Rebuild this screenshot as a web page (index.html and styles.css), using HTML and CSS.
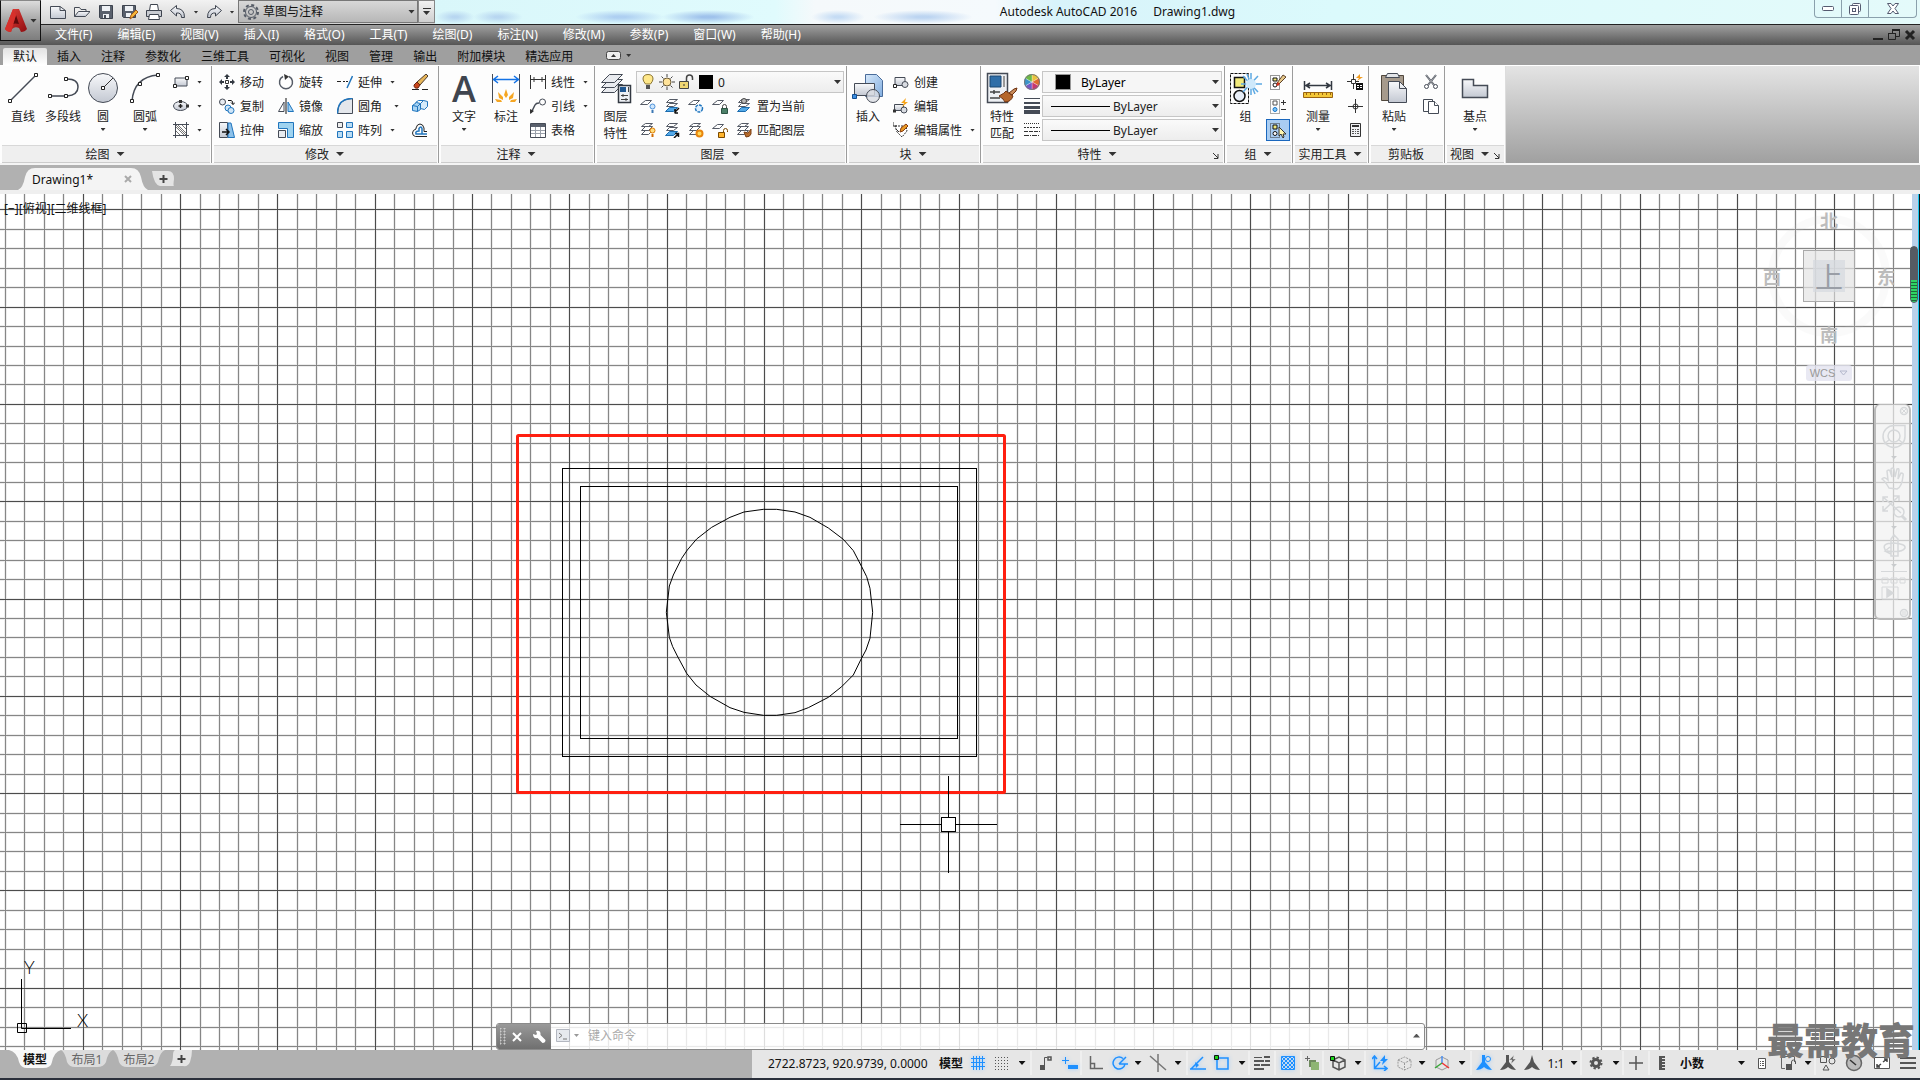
FILE: index.html
```html
<!DOCTYPE html>
<html lang="zh-CN">
<head>
<meta charset="utf-8">
<title>Autodesk AutoCAD 2016 - Drawing1.dwg</title>
<link rel="stylesheet" href="styles.css">
</head>
<body>
<svg class="sprite" aria-hidden="true">
  <defs>
    <linearGradient id="metal" x1="0" y1="0" x2="0" y2="1"><stop offset="0" stop-color="#f8f9fb"/><stop offset="1" stop-color="#c3c8d2"/></linearGradient>
    <linearGradient id="sky" x1="0" y1="0" x2="1" y2="1"><stop offset="0" stop-color="#d6e8fa"/><stop offset="1" stop-color="#82aee0"/></linearGradient>
    <linearGradient id="red" x1="0" y1="0" x2="1" y2="1"><stop offset="0" stop-color="#e8433c"/><stop offset="1" stop-color="#8e0d10"/></linearGradient>
    <pattern id="check" width="4" height="4" patternUnits="userSpaceOnUse"><path fill="#1e90ff" d="M0 0h2v2H0zM2 2h2v2H2z"/></pattern>
  </defs>
  <symbol id="plane" viewBox="0 0 16 16"><path d="M.5 6.500L5.500 2.500H11.500L7.500 6.500z" fill="#fff" stroke="#555b66"/></symbol>
  <symbol id="stack" viewBox="0 0 16 16"><g fill="#fff" stroke="#555b66"><path d="M1.500 12.500L5.500 8.500H12.500L8.500 12.500z"/><path d="M1.500 8.500L5.500 4.500H12.500L8.500 8.500z"/><path d="M1.500 4.500L5.500 1.500H12.500L8.500 4.500z"/></g></symbol>
  <symbol id="bluestack" viewBox="0 0 16 16"><g fill="#fff" stroke="#555b66"><path d="M1.500 13.500L5.500 9.500H13.500L9.500 13.500z" fill="#53a9e8" stroke="#1b6cae"/><path d="M2.500 8.500L5.500 5.500H13.500L9.500 8.500z"/><path d="M2.500 4.500L5.500 1.500H13.500L9.500 4.500z"/></g></symbol>
</svg>

<header class="top">
  <button class="app" aria-label="应用程序菜单"><svg width="24" height="26" viewBox="0 0 24 26"><path d="M9 1h6l8 20q-2 3-6 3l-2-4q-4-2-7 1l-1 3q-4 0-6-3z" fill="url(#red)"/><path d="M12 7l3 9q-4-1-6 0z" fill="#5f0a0c"/><path d="M9 1l3 6-5 17q-4 0-6-3z" fill="#d7302b"/></svg><i class="caret mid"></i></button>
  <div class="titlebar">
    <div class="quick">
      <button aria-label="新建"><svg width="16" height="16"><path d="M.5 2.500H10l5.500 4v8H.5z" fill="url(#metal)" stroke="#454b56"/><path d="M10 2.500v4h5.500" fill="none" stroke="#454b56"/></svg></button>
      <button aria-label="打开"><svg width="16" height="16"><path d="M.5 12.500v-9h5l1.500 2h5v2" fill="#eee" stroke="#454b56"/><path d="M.5 12.500l4-5h11.500l-4.500 5z" fill="url(#metal)" stroke="#454b56"/></svg></button>
      <button aria-label="保存"><svg width="16" height="16"><path d="M1.500 1.500h13v13h-12l-1-1z" fill="#59606c" stroke="#3d434e"/><path d="M4 2h8v5H4zM5 10h6v4H5z" fill="#eef1f5"/><path d="M6 11h2v3H6z" fill="#454b56"/></svg></button>
      <button aria-label="另存为"><svg width="16" height="16"><path d="M.5 1.500h13v12h-12l-1-1z" fill="#59606c" stroke="#3d434e"/><path d="M3 2h8v5H3zM4 9h5v4H4z" fill="#eef1f5"/><path d="M8 15l1-4 5-5 2 2-5 5z" fill="#f4b63a" stroke="#a55a17"/></svg></button>
      <button aria-label="打印"><svg width="16" height="16"><path d="M.5 6.500h15v6H.5z" fill="#c9ccd2" stroke="#3d434e"/><path d="M4.500.5h7l1 6h-9zM3.500 10.500h9l1 5h-11z" fill="#fff" stroke="#3d434e"/></svg></button>
      <button aria-label="放弃"><svg width="16" height="16"><path d="M.5 6.500l6-5v3q8 0 8 9h-3q0-5-5-4.500v3z" fill="url(#metal)" stroke="#3d434e"/></svg></button>
      <button class="drop" aria-label="放弃列表"><i class="caret"></i></button>
      <button aria-label="重做"><svg width="16" height="16"><path d="M15.500 6.500l-6-5v3q-8 0-8 9h3q0-5 5-4.500v3z" fill="url(#metal)" stroke="#3d434e"/></svg></button>
      <button class="drop" aria-label="重做列表"><i class="caret"></i></button>
    </div>
    <label class="workspace"><svg width="16" height="16" fill="none" stroke="#555b66"><circle cx="8" cy="8" r="2.500"/><circle cx="8" cy="8" r="5.500"/><circle cx="8" cy="8" r="7" stroke-width="2" stroke-dasharray="3 2.500"/></svg><select aria-label="工作空间"><option>草图与注释</option></select><i class="caret mid"></i></label>
    <button class="customize" aria-label="自定义快速访问工具栏"><i class="caret mid"></i></button>
    <div class="glass"><h1>Autodesk AutoCAD 2016 <span>Drawing1.dwg</span></h1>
      <div class="winbtns">
        <button aria-label="最小化"><svg width="12" height="6"><rect x=".5" y=".5" width="11" height="4" rx="1" fill="#fff" stroke="#555a70"/></svg></button>
        <button aria-label="还原"><svg width="12" height="12" fill="#fff" stroke="#555a70"><rect x="3.500" y=".5" width="8" height="8" rx="1"/><rect x=".5" y="2.500" width="9" height="9" rx="1"/><rect x="3.500" y="5.500" width="3" height="3"/></svg></button>
        <button class="wide" aria-label="关闭"><svg width="12" height="11"><path d="M.5.5h3.500l2 2.500 2-2.500h3.500l-3.500 5 3.500 5H8L6 8l-2 2.500H.5l3.500-5z" fill="#fff" stroke="#555a70"/></svg></button>
      </div>
    </div>
  </div>
  <nav class="menu">
    <a href="#">文件(F)</a><a href="#">编辑(E)</a><a href="#">视图(V)</a><a href="#">插入(I)</a><a href="#">格式(O)</a><a href="#">工具(T)</a><a href="#">绘图(D)</a><a href="#">标注(N)</a><a href="#">修改(M)</a><a href="#">参数(P)</a><a href="#">窗口(W)</a><a href="#">帮助(H)</a>
    <div class="docbtns">
      <button aria-label="最小化图形"><svg width="12" height="12"><path d="M1 10h10" stroke="#222" stroke-width="2"/></svg></button>
      <button aria-label="还原图形"><svg width="12" height="12" fill="none" stroke="#222"><path d="M4.500 4V1.500h7v6H8"/><path d="M4 1h8" stroke-width="2"/><path d="M.5 4.500h7v6h-7zM0 4.500h8" stroke-width="1"/></svg></button>
      <button aria-label="关闭图形"><svg width="12" height="12"><path d="M2 2l8 8M10 2l-8 8" stroke="#222" stroke-width="3"/></svg></button>
    </div>
  </nav>
</header>

<nav class="tabs">
  <a href="#" class="on">默认</a><a href="#">插入</a><a href="#">注释</a><a href="#">参数化</a><a href="#">三维工具</a><a href="#">可视化</a><a href="#">视图</a><a href="#">管理</a><a href="#">输出</a><a href="#">附加模块</a><a href="#">精选应用</a>
  <button class="mini" aria-label="最小化功能区"><svg width="15" height="9"><rect x=".5" y=".5" width="14" height="8" rx="2" fill="#eee" stroke="#444"/><path d="M5 6l2.500-3L10 6z" fill="#333"/></svg><i class="caret"></i></button>
</nav>

<main class="ribbon">
  <section class="panel draw"><div class="body">
    <button class="big w38"><svg width="32" height="32"><path d="M3 29L29 3" stroke="#454b56" stroke-width="1.500"/><path d="M1.500 27.500h3v3h-3zM27.500 1.500h3v3h-3z" fill="#fff" stroke="#222"/></svg><span>直线</span></button>
    <button class="big w42"><svg width="32" height="32" fill="none" stroke="#454b56" stroke-width="1.500"><path d="M3 24h17q11-1 11-9t-11-8"/><path d="M1.500 22.500h3v3h-3zM17.500 22.500h3v3h-3zM17.500 5.500h3v3h-3z" fill="#fff" stroke="#222" stroke-width="1"/></svg><span>多段线</span></button>
    <button class="big w38"><svg width="32" height="32"><circle cx="16" cy="16" r="14.500" fill="url(#metal)" stroke="#454b56"/><path d="M16 16L26 6" stroke="#333"/><path d="M14.500 14.500h3v3h-3z" fill="#fff" stroke="#222"/></svg><span>圆</span><i class="caret"></i></button>
    <button class="big w46"><svg width="32" height="32"><path d="M3 29Q5 5 29 3" fill="none" stroke="#454b56" stroke-width="1.500"/><path d="M1.500 27.500h3v3h-3zM27.500 1.500h3v3h-3zM9.500 10.500h3v3h-3z" fill="#fff" stroke="#222"/></svg><span>圆弧</span><i class="caret"></i></button>
    <div class="col pad5">
      <button class="tool" aria-label="矩形"><svg width="16" height="16"><path d="M2 4h12v8H2z" fill="url(#metal)" stroke="#454b56"/><path d="M.5 10.500h3v3h-3zM12.500 2.500h3v3h-3z" fill="#fff" stroke="#222"/></svg><i class="caret"></i></button>
      <button class="tool" aria-label="椭圆"><svg width="16" height="16"><ellipse cx="7.500" cy="8" rx="7" ry="4.500" fill="url(#metal)" stroke="#454b56"/><path d="M7.500 6v4M5.500 8h4" stroke="#222" stroke-width="1.500"/><path d="M6 2h3v3H6zM13 6.500h3v3h-3z" fill="#333"/></svg><i class="caret"></i></button>
      <button class="tool" aria-label="图案填充"><svg width="16" height="16" fill="none" stroke="#454b56"><path d="M2.500 0v16M13.500 0v16M0 2.500h16M0 13.500h16"/><path d="M3 5l8 8M3 9l4 4M5 3l8 8M9 3l4 4M3 3l10 10" stroke="#777"/></svg><i class="caret"></i></button>
    </div></div><h2>绘图 <i class="caret big-c"></i></h2></section>

  <section class="panel modify"><div class="body">
    <div class="col w59">
      <button class="tool"><svg width="16" height="16"><path d="M8 0l3 3H9v2H7V3H5zM8 16l3-3H9v-2H7v2H5zM0 8l3-3v2h2v2H3v2zM16 8l-3-3v2h-2v2h2v2z" fill="#333942"/><path d="M6.500 6.500h3v3h-3z" fill="#fff" stroke="#333"/></svg><span>移动</span></button>
      <button class="tool"><svg width="16" height="16" fill="#e8ebf0" stroke="#454b56"><circle cx="3.500" cy="4" r="3"/><path d="M9 2.500h3q2 0 2 4M12 4.500l2 2 2-2" fill="none" stroke="#111"/><g stroke="#2075bd" fill="#cfe5f7"><circle cx="9" cy="10" r="3"/><circle cx="12" cy="12.500" r="3"/></g></svg><span>复制</span></button>
      <button class="tool"><svg width="16" height="16"><path d="M.5.5h8v15h-8z" fill="url(#metal)" stroke="#454b56"/><path d="M9 1h3l3.500 14.500H9z" fill="#8cc1ea" stroke="#2075bd"/><path d="M3 10h7M7 7l3 3-3 3" stroke="#111" stroke-width="1.500" fill="none"/></svg><span>拉伸</span></button>
    </div>
    <div class="col w59">
      <button class="tool"><svg width="16" height="16"><path d="M5 2.500a6.500 6.500 0 1 0 6 0" fill="none" stroke="#555b66" stroke-width="1.500"/><path d="M6 0l5 2.500L7 6z" fill="#333"/></svg><span>旋转</span></button>
      <button class="tool"><svg width="16" height="16"><path d="M6 4v9.500H.5z" fill="#fff" stroke="#454b56"/><path d="M10 4v9.500h5.500z" fill="#9fd0f2" stroke="#2075bd"/><path d="M8 0v16" stroke="#111"/></svg><span>镜像</span></button>
      <button class="tool"><svg width="16" height="16"><path d="M.5.5h15v15h-6v-9h-9z" fill="#9fd3f0" stroke="#2075bd"/><path d="M.5 8.500h7v7h-7z" fill="#e8ebf0" stroke="#454b56"/></svg><span>缩放</span></button>
    </div>
    <div class="col w75">
      <button class="tool"><svg width="16" height="16"><path d="M0 7.500h4M6 7.500h2M9 7.500h2" stroke="#222"/><path d="M10 14L15.500 2" stroke="#2075bd" stroke-width="1.500"/></svg><span>延伸</span><i class="caret"></i></button>
      <button class="tool"><svg width="16" height="16"><path d="M.5 15.500q0-15 15-15v15z" fill="#e4e7ec" stroke="#454b56"/><path d="M.5 15.500q0-15 15-15" fill="none" stroke="#2075bd" stroke-width="1.500"/></svg><span>圆角</span><i class="caret far"></i></button>
      <button class="tool"><svg width="16" height="16" fill="#b9dcf4" stroke="#2075bd"><path d="M.5.5h5v5h-5z" fill="#eee" stroke="#454b56"/><path d="M9.500.5h6v5h-6zM.5 9.500h5v6h-5zM9.500 9.500h6v6h-6z"/></svg><span>阵列</span><i class="caret"></i></button>
    </div>
    <div class="col">
      <button class="tool" aria-label="删除"><svg width="16" height="16"><path d="M14 0l2 2-8 9-3-3z" fill="#e8b659" stroke="#4b3a2c"/><path d="M5 8l3 3-2 3q-4 1-4-3z" fill="#c9471b" stroke="#6b2410"/><path d="M0 15.500h7M10 15.500h6" stroke="#222"/></svg></button>
      <button class="tool" aria-label="分解"><svg width="16" height="16"><path d="M.5 7.500l4-3 4 1v6l-3 2-5-1z" fill="#a7d3f3" stroke="#2075bd"/><path d="M8.500 5.500l3-3 4 1v5l-3 3-4-1z" fill="#d6ebfa" stroke="#2075bd"/><path d="M3.500 4.500l3-2h5M.5 7.500l5 1 3-3M5.500 8.500v5" fill="none" stroke="#2075bd"/></svg></button>
      <button class="tool" aria-label="偏移"><svg width="16" height="16" fill="none" stroke="#222"><path d="M15 9.500h-3V6q-1-4-4-4T4 6v1Q.5 8 .5 11t3 3.500H15"/><path d="M15 12H4q-1-3 3-3V6.500q2-3 3 0V12" stroke="#2075bd" stroke-width="1.500"/></svg></button>
    </div></div><h2>修改 <i class="caret big-c"></i></h2></section>

  <section class="panel annotate"><div class="body">
    <button class="big w44"><b class="letter">A</b><span>文字</span><i class="caret"></i></button>
    <button class="big w40"><svg width="32" height="32"><path d="M2.500 2v29M29.500 2v29" stroke="#454b56"/><path d="M3 7.500h26M8 4L3.500 7.500 8 11M24 4l4.500 3.500L24 11" stroke="#1473e6" stroke-width="1.500" fill="none"/><path d="M16 17l2 6-2 3-2-3zM8 20l5 5v3l-4-2zM24 20l-5 5v3l4-2zM5 27l6 1 1 2H7zM27 27l-6 1-1 2h5z" fill="#f5a623"/></svg><span>标注</span></button>
    <div class="col pad4">
      <button class="tool"><svg width="16" height="16" stroke="#333"><path d="M.5 1v14M15.500 1v14M1 5.500h14M4 3v5M12 3v5" fill="none"/></svg><span>线性</span><i class="caret"></i></button>
      <button class="tool"><svg width="16" height="16" fill="none" stroke="#454b56"><path d="M1 15l4-8q1-2 4-2" stroke-width="1.500"/><circle cx="12.500" cy="4" r="3"/><path d="M0 16v-5l4 2z" fill="#333" stroke="none"/></svg><span>引线</span><i class="caret"></i></button>
      <button class="tool"><svg width="16" height="16"><path d="M.5 1.500h15v14H.5z" fill="#fff" stroke="#454b56"/><path d="M1 2h14v3H1z" fill="#59606c"/><path d="M1 8.500h14M1 11.500h14M5.500 5v10M10.500 5v10" stroke="#9aa0aa"/></svg><span>表格</span></button>
    </div></div><h2>注释 <i class="caret big-c"></i></h2></section>

  <section class="panel layers"><div class="body">
    <button class="big w41"><svg width="32" height="32"><g fill="#e9ebef" stroke="#454b56"><path d="M1.500 20.500l8-8h13l-8 8z"/><path d="M1.500 15.500l8-8h13l-8 8z"/><path d="M1.500 10.500l8-8h13l-8 8z"/></g><path d="M18.500 13.500h12v17h-12z" fill="#eef1f6" stroke="#333942" stroke-width="1.500"/><path d="M20 15h6v5h-6z" fill="#1f5791"/><path d="M28.500 15v5M21 23.500h7M21 27.500h7M23 22v3M26 26v3" stroke="#444"/></svg><span>图层<br>特性</span></button>
    <div class="col">
      <div class="combo layer"><svg width="16" height="16"><path d="M8 .5q5 0 5 4.500 0 2-2.500 5h-5Q3 7 3 5 3 .5 8 .5z" fill="#ffe88a" stroke="#8a7431"/><path d="M6 11h4v4H6z" fill="#555"/></svg><svg width="16" height="16"><circle cx="8" cy="8" r="4" fill="#ffe39a" stroke="#6b5a35"/><path d="M8 0v3M8 13v3M0 8h3M13 8h3M2.500 2.500l2 2M11.500 11.500l2 2M2.500 13.500l2-2M11.500 4.500l2-2" stroke="#444"/></svg><svg width="16" height="16"><path d="M1.500 7.500h9v7h-9z" fill="#f0d672" stroke="#444"/><path d="M8.500 7V4q0-3 3-3t3 3v2" fill="none" stroke="#444" stroke-width="1.500"/><path d="M6 10v2" stroke="#333"/></svg><b class="swatch"></b><select aria-label="图层"><option>0</option></select><i class="caret mid"></i></div>
      <div class="row">
        <button class="ico" aria-label="关"><svg width="16" height="16"><use href="#plane"/><circle cx="12.500" cy="8.500" r="2.500" fill="#cfe6fb" stroke="#4a90d9"/><path d="M11.500 12h2v3h-2z" fill="#3c78b5"/></svg></button>
        <button class="ico" aria-label="隔离"><svg width="16" height="16"><use href="#bluestack"/><path d="M15 10l-4 4v-3M11 15h3" stroke="#111" stroke-width="1.500" fill="none"/></svg></button>
        <button class="ico" aria-label="冻结"><svg width="16" height="16"><use href="#plane"/><circle cx="11" cy="10.500" r="3.500" fill="#e0f0ff" stroke="#2075bd" stroke-width="1.500" stroke-dasharray="3 1"/></svg></button>
        <button class="ico" aria-label="锁定"><svg width="16" height="16"><use href="#plane"/><path d="M9.500 10.500h6v5h-6z" fill="#4c8069" stroke="#2d5444"/><path d="M10.500 10V8.500q0-2 2-2t2 2V10" fill="none" stroke="#444"/></svg></button>
        <button class="ico" aria-label="置为当前图层"><svg width="16" height="16"><use href="#bluestack"/><circle cx="8" cy="3" r="2.500" fill="#bbb" stroke="#444"/></svg></button><span class="cap">置为当前</span>
      </div>
      <div class="row">
        <button class="ico" aria-label="打开所有图层"><svg width="16" height="16"><use href="#stack"/><circle cx="12.500" cy="8.500" r="2.500" fill="#ffdf80" stroke="#e07b00"/><path d="M11.500 12h2v3h-2z" fill="#d06a00"/></svg></button>
        <button class="ico" aria-label="取消隔离"><svg width="16" height="16"><use href="#bluestack"/><path d="M10 16l4-4M11 11.500h3.500V15" stroke="#111" stroke-width="1.500" fill="none"/></svg></button>
        <button class="ico" aria-label="解冻所有图层"><svg width="16" height="16"><use href="#stack"/><circle cx="11.500" cy="11.500" r="3" fill="#ffd95c" stroke="#e8850c" stroke-width="2"/></svg></button>
        <button class="ico" aria-label="解锁"><svg width="16" height="16"><use href="#plane"/><path d="M6.500 10.500h6v5h-6z" fill="#ffb52e" stroke="#7b4a00"/><path d="M11.500 10V8.500q0-2 2-2t2 2V10" fill="none" stroke="#7b4a00"/></svg></button>
        <button class="ico" aria-label="匹配"><svg width="16" height="16"><use href="#stack"/><path d="M15 7l-3 4-4-1 2 5q4 0 5-3z" fill="#b76c2c" stroke="#7b3e12"/></svg></button><span class="cap">匹配图层</span>
      </div>
    </div></div><h2>图层 <i class="caret big-c"></i></h2></section>

  <section class="panel block"><div class="body">
    <button class="big w42"><svg width="32" height="32"><path d="M13.500 2.500h11l6 6v16h-17z" fill="url(#sky)" stroke="#4a6c9a"/><path d="M2.500 11.500h20v12h-20z" fill="url(#metal)" stroke="#454b56"/><circle cx="21" cy="24" r="6.500" fill="#d9dce2" fill-opacity=".8" stroke="#454b56"/><path d="M.5 22.500h4v4h-4z" fill="#3f8fe0" stroke="#134f92"/></svg><span>插入</span></button>
    <div class="col pad4">
      <button class="tool"><svg width="16" height="16"><path d="M2 3.500h10v8H2z" fill="url(#metal)" stroke="#454b56"/><circle cx="12" cy="10.500" r="3" fill="#d9dce2" stroke="#454b56"/><path d="M.5 10.500h3v3h-3z" fill="#fff" stroke="#222"/></svg><span>创建</span></button>
      <button class="tool"><svg width="16" height="16"><path d="M1.500 6.500h9v6h-9z" fill="url(#metal)" stroke="#454b56"/><circle cx="11" cy="12" r="3" fill="#d9dce2" stroke="#454b56"/><path d="M13 0L8 5h3L9 9l6-5h-3z" fill="#f7a51c"/><path d="M0 11.500h3v3H0z" fill="#333"/></svg><span>编辑</span></button>
      <button class="tool"><svg width="16" height="16"><path d="M2 4h11l1 5-5 6-5-5z" fill="#fff" stroke="#333" stroke-dasharray="2 1"/><path d="M0 0v4h4M3 7l3 3" fill="none" stroke="#333"/><path d="M7 10l1-4 5-4 2 2-5 5z" fill="#e99a24" stroke="#873b10"/></svg><span>编辑属性</span><i class="caret"></i></button>
    </div></div><h2>块 <i class="caret big-c"></i></h2></section>

  <section class="panel props"><div class="body">
    <button class="big w42"><svg width="32" height="32"><path d="M1.500 1.500h20v29h-20z" fill="#eef0f4" stroke="#454b56" stroke-width="1.500"/><path d="M4 4h11v11H4z" fill="#2f6ea8" stroke="#1b4770"/><path d="M18 4v11" stroke="#999" stroke-width="2"/><path d="M4 20h10M4 26h10M8 18v4" stroke="#444" stroke-width="1.500"/><path d="M13 24q6-3 7-5l7 5q-2 6-8 6-1-3-6-6z" fill="#b5662b" stroke="#6e3210"/><path d="M23 21l5-4 3-1-1 3-4 4z" fill="#c98b5a" stroke="#6e3210"/></svg><span>特性<br>匹配</span></button>
    <div class="col w18">
      <span class="mark"><svg width="16" height="16"><g stroke="#fff" stroke-width=".3"><path d="M8 8L8 0A8 8 0 0 1 15 4z" fill="#e9c33d"/><path d="M8 8l7-4a8 8 0 0 1 0 8z" fill="#df6b2f"/><path d="M8 8l7 4a8 8 0 0 1-7 4z" fill="#c63870"/><path d="M8 8v8a8 8 0 0 1-7-4z" fill="#7557c4"/><path d="M8 8L1 12a8 8 0 0 1 0-8z" fill="#3b93c9"/><path d="M8 8L1 4a8 8 0 0 1 7-4z" fill="#6cba45"/></g><circle cx="8" cy="8" r="7.500" fill="none" stroke="#777"/></svg></span>
      <span class="mark"><svg width="16" height="16" fill="#454b56"><path d="M0 0h16v1H0zM0 4h16v2H0zM0 8h16v3H0zM0 12h16v4H0z"/></svg></span>
      <span class="mark"><svg width="16" height="16" stroke="#333"><path d="M0 1.500h16" stroke-dasharray="1 1"/><path d="M0 5.500h16" stroke-dasharray="2 1"/><path d="M0 9.500h16" stroke-dasharray="4 1"/><path d="M0 13.500h16" stroke-dasharray="5 1 1 1"/></svg></span>
    </div>
    <div class="col">
      <div class="combo color"><b class="swatch"></b><select aria-label="对象颜色"><option>ByLayer</option></select><i class="caret mid"></i></div>
      <div class="combo line"><b class="rule"></b><select aria-label="线宽"><option>ByLayer</option></select><i class="caret mid"></i></div>
      <div class="combo line"><b class="rule"></b><select aria-label="线型"><option>ByLayer</option></select><i class="caret mid"></i></div>
    </div></div><h2>特性 <i class="caret big-c"></i><svg class="launch" width="7" height="7" viewBox="0 0 7 7"><path d="M1 1l5 5M6 2v4.500H2" fill="none" stroke="#333"/></svg></h2></section>

  <section class="panel group"><div class="body">
    <button class="big w41"><svg width="32" height="32"><path d="M.5 1.500h18v30H.5z" fill="none" stroke="#111" stroke-dasharray="3 1"/><path d="M4.500 5.500h10v10h-10z" fill="#f1ea7c" stroke="#111" stroke-width="1.500"/><circle cx="9.500" cy="24" r="5.500" fill="#e8eef8" stroke="#111" stroke-width="1.500"/><path d="M21 1v22M11 12h21M13 4l15 16M28 4L13 20M17 2l8 20" stroke="#5da9e2" stroke-width="1.500"/><circle cx="21" cy="12" r="5" fill="#cfe9fb"/></svg><span>组</span></button>
    <div class="col">
      <button class="ico" aria-label="解除编组"><svg width="16" height="16"><path d="M.5 1.500h9v14h-9z" fill="none" stroke="#333" stroke-dasharray="1 1"/><path d="M3 4h4v3H3z" fill="#f1ea7c" stroke="#111"/><circle cx="5" cy="11" r="2" fill="#fff" stroke="#111"/><path d="M7 9l6-8 3 2-7 7z" fill="#e7c98a" stroke="#5b4029"/><path d="M6 11l2-3 2 2-2 2z" fill="#d2321e"/></svg></button>
      <button class="ico" aria-label="组编辑"><svg width="16" height="16"><path d="M.5 1.500h9v14h-9z" fill="none" stroke="#555" stroke-dasharray="1 1"/><path d="M3 3h4v4H3z" fill="#fff" stroke="#555"/><circle cx="5" cy="11.500" r="2" fill="#7cc4f5" stroke="#1473c9"/><path d="M11 4.500h5M13.500 2v5M11 11.500h5" stroke="#333"/></svg></button>
      <button class="ico pressed" aria-label="组选择"><svg width="16" height="16"><path d="M.5 1.500h9v14h-9z" fill="none" stroke="#333" stroke-dasharray="1 1"/><path d="M3 3h4v4H3z" fill="#f1ea7c" stroke="#111"/><circle cx="5" cy="11.500" r="2" fill="#fff" stroke="#111"/><path d="M9 5v9l2-2 2 4 1-1-1-3h3z" fill="#fff6ae" stroke="#333"/></svg></button>
    </div></div><h2>组 <i class="caret big-c"></i></h2></section>

  <section class="panel util"><div class="body">
    <button class="big w50"><svg width="32" height="32"><path d="M2.500 9v9M29.500 9v9M3 13.500h26M8 11l-4 2.500L8 16M24 11l4 2.500-4 2.500" fill="none" stroke="#333942" stroke-width="1.500"/><path d="M1.500 20.500h29v5h-29z" fill="#f3c738" stroke="#9a6412"/><path d="M4.500 20v3M8.500 20v3M12.500 20v3M16.500 20v3M20.500 20v3M24.500 20v3M28.500 20v3" stroke="#9a6412"/></svg><span>测量</span><i class="caret"></i></button>
    <div class="col">
      <button class="ico" aria-label="快速选择"><svg width="16" height="16"><path d="M0 7.500h4M8 7.500h4M6.500 0v5M6.500 10v5M4.500 5.500h4v4h-4z" fill="none" stroke="#333"/><path d="M13 0l-4 4h3l-2 3 6-4h-3z" fill="#f29b1d"/><path d="M9 9h7v7H9z" fill="#111"/><path d="M10 11h2v1h-2zM13 11h2v1h-2zM10 13h2v1h-2zM13 13h2v1h-2z" fill="#fff"/></svg></button>
      <button class="ico" aria-label="点坐标"><svg width="16" height="16" stroke="#333" fill="none"><path d="M8.500 1v14M1 8.500h15"/><circle cx="8.500" cy="8.500" r="2.500"/></svg></button>
      <button class="ico" aria-label="计算器"><svg width="16" height="16"><path d="M3.500 1.500h10v13h-10z" fill="#f0f1f3" stroke="#333"/><path d="M5 3h7v2H5z" fill="#333"/><path d="M5 7h2v1H5zM8 7h1v1H8zM10 7h2v1h-2zM5 9h2v1H5zM8 9h1v1H8zM10 9h2v1h-2zM5 11h2v1H5zM8 11h1v1H8zM10 11h2v1h-2z" fill="#555"/></svg></button>
    </div></div><h2>实用工具 <i class="caret big-c"></i></h2></section>

  <section class="panel clip"><div class="body">
    <button class="big w50"><svg width="32" height="32"><path d="M3.500 3.500h22v25h-22z" fill="#a69a8c" stroke="#51483d"/><path d="M7.500 5.500l2-4h10l2 4z" fill="#e3e5e9" stroke="#454b56"/><path d="M10.500 9.500h11l7 7v14h-18z" fill="url(#metal)" stroke="#454b56"/><path d="M21.500 9.500v7h7" fill="none" stroke="#454b56"/></svg><span>粘贴</span><i class="caret"></i></button>
    <div class="col">
      <button class="ico" aria-label="剪切"><svg width="16" height="16" fill="none" stroke="#454b56"><path d="M3 1l8 10M13 1L5 11" stroke-width="2"/><path d="M3 1l8 10M13 1L5 11" stroke="#ddd" stroke-width=".6"/><circle cx="3.500" cy="12.500" r="2"/><circle cx="12.500" cy="12.500" r="2"/></svg></button>
      <button class="ico" aria-label="复制剪裁"><svg width="16" height="16" fill="#fff" stroke="#454b56"><path d="M.5 1.500h9v12h-9z"/><path d="M5.500 3.500h6l4 4v8h-10z"/><path d="M11.500 3.500v4h4"/></svg></button>
    </div></div><h2>剪贴板</h2></section>

  <section class="panel view"><div class="body">
    <button class="big w60"><svg width="32" height="32"><path d="M3.500 7.500h11v6h14v12h-25z" fill="url(#metal)" stroke="#454b56" stroke-width="1.500"/></svg><span>基点</span><i class="caret"></i></button>
    </div><h2>视图 <i class="caret big-c"></i><svg class="launch" width="7" height="7" viewBox="0 0 7 7"><path d="M1 1l5 5M6 2v4.500H2" fill="none" stroke="#333"/></svg></h2></section>
  <div class="rest"></div>
</main>

<nav class="files">
  <div class="filetab"><svg class="shape" width="130" height="22" viewBox="0 0 130 22" preserveAspectRatio="none"><path d="M0 22Q5 20 7 9Q9 0 17 0H113Q121 0 123 9Q125 20 130 22z" fill="#f4f4f4"/></svg><a href="#">Drawing1*</a><button aria-label="关闭图形"><svg width="8" height="8"><path d="M1 1l6 6M7 1L1 7" stroke="#aaa" stroke-width="2"/></svg></button></div>
  <button class="add" aria-label="新图形"><svg width="22" height="16"><path d="M0 0H16Q22 0 22 8Q21 15 22 15H8Q2 14 0 0z" fill="#e4e4e4"/><path d="M11.500 4v8M7.500 8h8" stroke="#444" stroke-width="2"/></svg></button>
</nav>

<section class="canvas">
  <div class="sheet">
    <svg class="drawing" width="100%" height="100%" fill="none">
      <path id="minor-soft" stroke="#000" stroke-opacity=".07" stroke-width="3"/>
      <path id="minor" stroke="#868686"/>
      <path id="major" stroke="#4c4c4c"/>
      <g transform="translate(0 -194)" stroke="#000">
        <rect x="562.500" y="468.500" width="414" height="288"/>
        <rect x="580.500" y="486.500" width="377" height="252"/>
        <path stroke-width="3" transform="translate(500 420) scale(.33333)" d="M790 268H830L885 276L930 292L985 324L1030 358L1060 392L1085 440L1100 470L1110 505L1118 577L1110 655L1098 690L1082 720L1060 765L1025 800L985 832L925 863L885 878L830 886H790L732 877L690 863L630 829L588 795L560 760L532 708L518 680L508 652L499 577L508 498L520 465L545 415L562 390L590 357L635 322L690 292L732 276z"/>
        <rect x="517.500" y="435.500" width="487" height="357" rx="1" stroke="#ff1f10" stroke-width="3"/>
        <path d="M900 824.500H997M948.500 776V873"/><rect x="941.500" y="817.500" width="14" height="14" fill="#fff"/>
        <path d="M21.500 979V1028.500H71M17.500 1023.500h9v9h-9z"/>
        <g fill="#000" stroke="none" class="axis"><text x="24" y="974">Y</text><text x="77" y="1027">X</text></g>
      </g>
    </svg>
    <p class="viewlabel">[−][俯视][二维线框]</p>
    <div class="cube">
      <svg width="124" height="124" fill="none"><circle cx="62" cy="62" r="57" stroke="#ccc" stroke-opacity=".1" stroke-width="8"/></svg>
      <b class="n">北</b><b class="w">西</b><b class="e">东</b><b class="s">南</b><button class="face">上</button>
    </div>
    <button class="wcs">WCS <svg width="9" height="6"><path d="M1 1h7L4.500 5z" fill="none" stroke="#b4b8cc"/></svg></button>
    <div class="navbar">
      <svg width="36" height="216" fill="none" stroke="#d6d8da" stroke-width="1.500"><circle cx="28" cy="6" r="3.500"/><path d="M26 4l4 4M30 4l-4 4" stroke-width="1"/><path d="M18 20.500h11v11a11 11 0 1 1-11-11z"/><circle cx="18" cy="31" r="6"/><path d="M8 39l5-4M28 39l-5-4"/><path d="M15 51h6l-3 3zM15 121h6l-3 3zM15 159h6l-3 3z" fill="#c9cbcd" stroke="none"/><path d="M13 83Q9 76 6 74q2-3 6 1l-1-9q2-2 3 0l2 6-1-8q2-2 3 0l1 8 2-8q2-1 2 1l-1 9 3-6q3 0 2 3-1 11-6 13z"/><path d="M7 92l18 16M23 91L7 106M7 97v-5h5M18 91h5v5M7 101v5h5"/><circle cx="23" cy="107" r="5"/><path d="M26 111l4 4" stroke-width="3"/><path d="M15 151v-17l3-4 4 4v17zM10 146q-6-8 8-8 12 1 11 5-3 5-18 3M14 142l-5 4 6 3"/><path d="M5 166.500h26M6 173h6v5H6zM15 173h6v5h-6zM24 173h5v5h-5zM6 182h16v12H6z" stroke-width="1"/><path d="M11 184v8l6-4z" fill="#d6d8da"/><circle cx="28" cy="208" r="3.500"/><path d="M26 207h4M26 209h4" stroke-width="1"/></svg>
    </div>
    <form class="command">
      <div class="grip"><svg width="6" height="18" fill="#ccc"><path d="M0 0h1v1H0zM0 3h1v1H0zM0 6h1v1H0zM0 9h1v1H0zM0 12h1v1H0zM0 15h1v1H0zM4 0h1v1H4zM4 3h1v1H4zM4 6h1v1H4zM4 9h1v1H4zM4 12h1v1H4zM4 15h1v1H4z" stroke="#ccc"/></svg>
      <button type="button" aria-label="关闭命令行"><svg width="10" height="10"><path d="M1 1l8 8M9 1L1 9" stroke="#fff" stroke-width="2"/></svg></button>
      <button type="button" class="wrench" aria-label="自定义"><svg width="14" height="14"><path d="M1 4l3 1 1-1-1-3q5-1 4.500 4l5 5q0 3-3 3l-5-5Q1 9 1 4z" fill="#fff"/></svg></button></div>
      <span class="prompt"><svg width="14" height="13"><path d="M.5.5h13v12H.5z" fill="#e6e9ee" stroke="#b3b7c0"/><path d="M3 4l3 2.500L3 9M7 10h4" fill="none" stroke="#777"/></svg><i class="caret"></i></span>
      <input aria-label="命令" placeholder="键入命令"><i class="caret up"></i>
    </form>
  </div>
  <div class="edge"><i></i></div>
</section>

<footer class="foot">
  <nav class="layouts">
    <a href="#" class="on"><svg width="52" height="18"><path d="M0 0H52Q45 2 43 12Q42 18 34 18H18Q12 18 10 12Q8 2 0 0z" fill="#f8f8f8"/></svg><span>模型</span></a>
    <a href="#"><svg width="52" height="18"><path d="M0 0H52Q47 2 45 12Q43 17 36 17H14Q8 17 6 12Q4 2 0 0z" fill="#dcdcdc"/></svg><span>布局1</span></a>
    <a href="#"><svg width="52" height="18"><path d="M0 0H52Q47 2 45 12Q43 17 36 17H14Q8 17 6 12Q4 2 0 0z" fill="#dcdcdc"/></svg><span>布局2</span></a>
    <button aria-label="新建布局"><svg width="22" height="17"><path d="M5 0H22Q22 6 20 12Q18 17 13 16H0Q3 12 3 5Q3 1 5 0z" fill="#e4e4e4"/><path d="M11.500 5v8M7.500 9h8" stroke="#444" stroke-width="2"/></svg></button>
  </nav>
  <div class="status">
    <span class="coords">2722.8723, 920.9739, 0.0000</span><button class="model">模型</button>
    <button class="s24" aria-label="栅格"><svg class="glow" width="14" height="14" stroke="#1e90ff"><path d="M2.500 0v14M5.500 0v14M8.500 0v14M11.500 0v14M0 2.500h14M0 6.500h14M0 10.500h14" fill="none"/></svg></button>
    <button class="s24" aria-label="捕捉"><svg width="14" height="14" stroke="#555"><path d="M0 1.500h14M0 4.500h14M0 7.500h14M0 10.500h14M0 13.500h14" stroke-dasharray="1 2"/></svg></button><button class="s16" aria-label="捕捉设置"><i class="caret mid"></i></button><hr>
    <button class="s28" aria-label="推断约束"><svg width="14" height="14"><path d="M5.500 11V1.500h3" fill="none" stroke="#555"/><path d="M9 1h3v3H9z" fill="none" stroke="#555" stroke-width="1.500"/><path d="M1 9h5v5H1z" fill="#555"/></svg></button>
    <button class="s20" aria-label="动态输入"><svg class="glow" width="16" height="14"><path d="M0 4.500h7M3.500 1v7" stroke="#1e90ff"/><path d="M6 9h10v4H6z" fill="#1e90ff"/></svg></button><hr>
    <button class="s28" aria-label="正交"><svg width="14" height="14"><path d="M1.500 0v12.500H14M1.500 7.500h4v5" fill="none" stroke="#666" stroke-width="1.500"/></svg></button>
    <button class="s20" aria-label="极轴"><svg class="glow" width="16" height="14"><path d="M11 2.500A6 6 0 1 0 13 8M7 8h9M7 8l7-7" fill="none" stroke="#1e90ff" stroke-width="1.500"/></svg></button><button class="s16" aria-label="极轴设置"><i class="caret mid"></i></button>
    <button class="s24" aria-label="等轴测"><svg width="18" height="18"><path d="M9 0v18M1 2l16 14" stroke="#777" stroke-width="1.500"/></svg></button><button class="s16" aria-label="等轴测设置"><i class="caret mid"></i></button><hr>
    <button class="s20" aria-label="对象捕捉追踪"><svg class="glow" width="16" height="14"><path d="M0 13h16M1 13L13 1" stroke="#1e90ff" stroke-width="1.500"/><path d="M5 6l4 3-3 3z" fill="#1e90ff"/></svg></button>
    <button class="s28" aria-label="对象捕捉"><svg class="glow" width="16" height="16"><path d="M3 3h11v11H3z" fill="none" stroke="#1e90ff" stroke-width="1.500"/><path d="M.5.5h4v4h-4z" fill="#1ad31a" stroke="#111"/></svg></button><button class="s12" aria-label="捕捉模式"><i class="caret mid"></i></button><hr>
    <button class="s24" aria-label="线宽"><svg width="16" height="14" fill="#555"><path d="M0 1h8v1H0zM10 0h6v2h-6zM0 4h10v2H0zM11 4h5v2h-5zM0 8h6v2H0zM7 8h9v2H7zM0 12h10v2H0z"/></svg></button><hr>
    <button class="s24" aria-label="透明度"><svg class="glow" width="14" height="14"><path d="M.5.5h13v13H.5z" fill="url(#check)" stroke="#1e90ff"/></svg></button><hr>
    <button class="s20" aria-label="选择循环"><svg width="14" height="14"><path d="M0 2.500h5M2.500 0v5" stroke="#666"/><path d="M4 4h7v2H6v5H4z" fill="#6f8a5f"/><path d="M6 6h8v8H6z" fill="#8eb573"/></svg></button><hr>
    <button class="s28" aria-label="三维对象捕捉"><svg width="16" height="16"><path d="M3 5l6-3 6 3v7l-6 3-6-3zM3 5l6 3 6-3M9 8v7" fill="none" stroke="#555" stroke-width="1.500"/><path d="M.5 1.500h4v4h-4z" fill="#1ad31a" stroke="#111"/></svg></button><button class="s12" aria-label="三维捕捉设置"><i class="caret mid"></i></button><hr>
    <button class="s28" aria-label="动态 UCS"><svg class="glow" width="16" height="16"><path d="M2.500 1v12.500H15M2.500 13.500L8 7M0 4l2.500-3L5 4M12 11l3 2.500-3 2.500" fill="none" stroke="#1e90ff" stroke-width="1.500"/><path d="M13 0L8 6h3l-1 4 6-6h-3z" fill="#1e90ff"/></svg></button>
    <button class="s20" aria-label="选择过滤"><svg width="15" height="15"><path d="M1 4l6.500-3L14 4v7l-6.500 3L1 11zM1 4l6.500 3L14 4M7.500 7v7" fill="none" stroke="#999" stroke-dasharray="2 1"/></svg></button><button class="s16" aria-label="过滤设置"><i class="caret mid"></i></button>
    <button class="s24" aria-label="小控件"><svg width="16" height="16"><path d="M2 5l6-3 6 3v7l-6 3-6-3z" fill="none" stroke="#999"/><path d="M8 8V1" stroke="#4b8ff0" stroke-width="1.500"/><path d="M8 8l-7 5" stroke="#38a838" stroke-width="1.500"/><path d="M8 8l7 5" stroke="#e33" stroke-width="1.500"/></svg></button><button class="s16" aria-label="小控件设置"><i class="caret mid"></i></button><hr>
    <button class="s24" aria-label="注释可见性"><svg class="glow" width="16" height="16"><path d="M6 0h3v7l7 8q-5 0-8-3-3 3-8 3l6-8z" fill="#1e90ff"/><circle cx="12" cy="4" r="2.500" fill="#e6e6e6" stroke="#1e90ff"/></svg></button>
    <button class="s24" aria-label="自动缩放"><svg width="16" height="16"><path d="M6 0h3v7l7 8q-5 0-8-3-3 3-8 3l6-8z" fill="#555"/><path d="M14 0l-5 5h3l-1 4 5-5h-3z" fill="#666" stroke="#e6e6e6" stroke-width=".5"/></svg></button>
    <button class="s24" aria-label="注释比例"><svg width="16" height="16"><path d="M8 0l2 7 6 8q-5 0-8-3-3 3-8 3l6-8z" fill="#555"/></svg></button>
    <button class="s24">1:1</button><button class="s12" aria-label="比例列表"><i class="caret mid"></i></button><hr>
    <button class="s28" aria-label="切换工作空间"><svg width="14" height="14" fill="none" stroke="#555"><circle cx="7" cy="7" r="3.500" stroke-width="3"/><circle cx="7" cy="7" r="5.500" stroke-width="2" stroke-dasharray="2.300 2"/></svg></button><button class="s12" aria-label="工作空间列表"><i class="caret mid"></i></button><hr>
    <button class="s24" aria-label="注释监视器"><svg width="14" height="14"><path d="M7 0v14M0 7h14" stroke="#555" stroke-width="1.500"/></svg></button><hr>
    <button class="s24" aria-label="单位"><svg width="6" height="14"><path d="M0 0h6v14H0z" fill="#555"/><path d="M3 2.500h3M3 5.500h3M3 8.500h3M3 11.500h3" stroke="#e6e6e6"/></svg></button>
    <label class="units"><select aria-label="图形单位"><option>小数</option></select><i class="caret mid"></i></label>
    <button class="s24" aria-label="快捷特性"><svg width="8" height="11"><path d="M.5.5h7v10h-7z" fill="#fff" stroke="#555"/><path d="M2 3.500h1M4 3.500h2M2 5.500h1M4 5.500h2M2 7.500h1M4 7.500h2" stroke="#555"/></svg></button>
    <button class="s28" aria-label="锁定用户界面"><svg width="16" height="16"><path d="M5 13.500H1.500v-12h13V7" fill="none" stroke="#666"/><path d="M6 9h6v6H6z" fill="#555"/><path d="M11.500 9V7q0-2 2-2t2 2v2" fill="none" stroke="#555"/></svg></button><button class="s12" aria-label="锁定列表"><i class="caret mid"></i></button><hr>
    <button class="s24" aria-label="隔离对象"><svg width="16" height="16" fill="none" stroke="#555"><path d="M.5 1.500h6v6h-6zM6 10l3 5H3z"/><circle cx="12" cy="6" r="3"/></svg></button>
    <button class="s28" aria-label="硬件加速"><svg width="18" height="18"><circle cx="9" cy="9" r="7.500" fill="#bbb" stroke="#666" stroke-width="1.500"/><path d="M5 6l6 5" stroke="#333" stroke-width="1.500"/></svg></button>
    <button class="s28" aria-label="全屏显示"><svg width="16" height="12"><path d="M.5.5h15v11H.5z" fill="#fff" stroke="#555"/><path d="M9 5l4-3M10 2h3v3M7 7l-4 3M3 7v3h3" fill="none" stroke="#444" stroke-width="1.500"/></svg></button>
    <button class="s24" aria-label="自定义"><svg width="16" height="12"><path d="M0 1h16M0 6h16M0 11h16" stroke="#555" stroke-width="2"/></svg></button>
  </div>
  <div class="watermark">最需教育</div>
</footer>
<script src="grid.js"></script>
</body>
</html>
```
FILE: styles.css
```css
* { box-sizing: border-box; }
body {
  margin: 0;
  min-height: 100vh;
  display: flex;
  flex-direction: column;
  overflow: hidden;
  background: #b1b1b1;
  color: #222;
  font: 12px/17px "Noto Sans", "Noto Sans CJK SC", sans-serif;
}
button, select, input { font: inherit; color: inherit; border: 0; padding: 0; margin: 0; background: none; appearance: none; }
button { display: flex; align-items: center; justify-content: center; flex: none; white-space: nowrap; }
a { color: inherit; text-decoration: none; white-space: nowrap; }
h1, h2, p { margin: 0; font-size: 12px; font-weight: 400; }
svg { flex: none; display: block; }
.sprite { position: absolute; width: 0; height: 0; }

.caret { flex: none; width: 5px; height: 3px; background: #333; clip-path: polygon(0 0, 100% 0, 50% 100%); }
.caret.mid { width: 7px; height: 4px; }
.caret.big-c { width: 8px; height: 4px; }
.caret.up { width: 7px; height: 4px; clip-path: polygon(50% 0, 100% 100%, 0 100%); }

/* Title bar and menu */
.top { display: grid; grid-template: 24px 21px / 41px 1fr; }
.app { grid-area: 1 / 1 / 3 / 2; z-index: 1; height: 41px; gap: 2px; border: 1px solid #111; border-top-color: #888; background: linear-gradient(#dcdcdc, #9b9b9b 60%, #7d7d7d); }
.titlebar { grid-area: 1 / 2; display: flex; background: linear-gradient(#f2f2f2, #d3d3d3); }
.quick { display: flex; align-items: center; padding-left: 5px; width: 197px; }
.quick button { width: 24px; height: 24px; }
.quick .drop { width: 12px; }
.workspace { display: flex; align-items: center; gap: 4px; width: 180px; height: 23px; padding: 0 2px 0 4px; border: 1px solid #777; background: linear-gradient(#d8d8d8, #b7b7b7); }
.workspace select { flex: 1; height: 21px; color: #111; }
.customize { width: 17px; height: 23px; border: 1px solid #888; flex-direction: column; gap: 2px; background: linear-gradient(#f2f2f2, #cfcfcf); }
.customize::before { content: ""; width: 8px; height: 1px; background: #333; }
.glass {
  flex: 1; display: flex; align-items: flex-start; position: relative;
  background:
    radial-gradient(ellipse at center, #a9c8ecb0 10%, transparent 70%) 0 10px / 40px 14px no-repeat,
    radial-gradient(ellipse at center, #a9c8ecb0 10%, transparent 70%) 38px 10px / 50px 14px no-repeat,
    radial-gradient(ellipse at center, #9fc2eec0 10%, transparent 70%) 140px 10px / 90px 14px no-repeat,
    radial-gradient(ellipse at center, #8bb0e6c0 10%, transparent 70%) 226px 10px / 94px 14px no-repeat,
    radial-gradient(ellipse at center, #a9cbf0a0 10%, transparent 70%) 376px 10px / 54px 14px no-repeat,
    radial-gradient(ellipse at center, #a3c4ecb0 10%, transparent 70%) 438px 10px / 100px 14px no-repeat,
    linear-gradient(90deg, #d9f7fa, #e0fbfd 340px, #f5f9fb 380px, #f5fafd 560px, #d8f3fa 620px, #dbfafc 900px, #e4fafa);
}
.glass h1 { flex: 1; padding-right: 14px; color: #111; line-height: 24px; text-align: center; white-space: pre; }
.glass h1 span { margin-left: 13px; }
.winbtns { display: flex; margin-right: 3px; border: 1px solid #8aa0ac; border-top: 0; border-radius: 0 0 4px 4px; }
.winbtns button { width: 27px; height: 17px; border-right: 1px solid #8aa0ac; }
.winbtns .wide { width: 47px; border: 0; }
.menu { grid-area: 2 / 1 / 3 / 3; display: flex; gap: 25px; align-items: center; padding: 0 4px 1px 55px; border-top: 1px solid #222; background: linear-gradient(#a0a0a0, #555); color: #fff; }
.docbtns { display: flex; gap: 4px; margin-left: auto; }

/* Ribbon tabs */
.tabs { display: flex; align-items: flex-end; height: 20px; padding-left: 3px; background: #9f9f9f; color: #111; }
.tabs a { padding: 0 10px; line-height: 17px; }
.tabs .on { background: linear-gradient(#e2e2e2, #fff); border-radius: 2px 2px 0 0; }
.mini { gap: 5px; margin-left: 23px; height: 19px; }

/* Ribbon */
.ribbon { display: flex; height: 100px; border-top: 1px solid #fff; border-bottom: 2px solid #f4f4f4; background: #fff; }
.panel { flex: none; display: flex; flex-direction: column; border-right: 1px solid #9c9c9c; background: #fdfdfd; }
.panel .body { flex: 1; display: flex; padding-top: 4px; }
.panel h2 { display: flex; align-items: center; justify-content: center; gap: 7px; height: 18px; margin: 0 1px 0 2px; padding-right: 2px; background: #efefef; border-top: 1px solid #d8d8d8; border-bottom: 1px solid #ccc; position: relative; }
.draw { width: 212px; }
.draw .body { padding-left: 4px; }
.modify { width: 227px; }
.modify .body { padding-left: 7px; }
.annotate { width: 156px; }
.annotate .body { padding-left: 3px; }
.layers { width: 252px; }
.block { width: 134px; }
.props { width: 244px; }
.group { width: 68px; }
.util, .clip { width: 76px; }
.view { width: 61px; border-right-color: #ddd; }
.view h2, .props h2 { padding-right: 12px; }
.launch { position: absolute; right: 4px; top: 6px; }
.rest { flex: 1; margin-right: 1px; background: linear-gradient(#e4e4e4, #a0a0a0); }
.big { flex-direction: column; justify-content: flex-start; height: 72px; padding-top: 2px; gap: 4px; }
.big > span { text-align: center; }
.big .caret { margin-top: -1px; }
.letter { width: 32px; height: 32px; font: 600 36px/34px "Open Sans", sans-serif; color: #3f454f; text-align: center; }
.w18 { width: 18px; } .w38 { width: 38px; } .w40 { width: 40px; } .w41 { width: 41px; } .w42 { width: 42px; }
.w44 { width: 44px; } .w46 { width: 46px; } .w50 { width: 50px; } .w59 { width: 59px; } .w60 { width: 60px; } .w75 { width: 75px; }
.col { flex: none; display: flex; flex-direction: column; }
.pad4 { padding-left: 4px; }
.pad5 { padding-left: 5px; }
.tool { height: 24px; gap: 5px; justify-content: flex-start; }
.tool .caret { margin-left: 3px; }
.tool .caret.far { margin-left: 7px; }
.row { display: flex; align-items: center; height: 24px; }
.ico { width: 24px; height: 24px; }
.pressed { height: 22px; margin-top: 1px; background: #a9cdf2; border: 1px solid #1a67bd; }
.cap { padding-left: 1px; }
.mark { display: flex; align-items: center; justify-content: center; height: 24px; }
.combo { display: flex; align-items: center; height: 22px; margin: 1px; padding-right: 2px; border: 1px solid #c6c6c6; background: linear-gradient(#fafafa, #ededed); }
.combo select { flex: 1; min-width: 0; height: 20px; }
.layer { width: 208px; padding-left: 3px; gap: 3px; margin-left: 0; }
.layer .swatch { width: 14px; height: 14px; background: #000; margin-left: 2px; margin-right: 2px; }
.color, .line { width: 180px; }
.color { padding-left: 12px; gap: 10px; color: #000; background: #f6f6f6; }
.color .swatch { width: 16px; height: 16px; background: #000; border: 1px solid #999; }
.line { padding-left: 8px; gap: 3px; }
.rule { width: 59px; height: 1px; background: #000; }

/* Drawing tabs */
.files { display: flex; align-items: flex-end; height: 29px; padding-left: 18px; background: #b1b1b1; border-bottom: 4px solid #efefef; }
.filetab { display: flex; align-items: center; width: 130px; height: 22px; padding: 0 16px 0 14px; position: relative; justify-content: space-between; font-size: 12px; color: #111; }
.filetab .shape { position: absolute; inset: 0; }
.filetab a, .filetab button { position: relative; }
.add { align-self: center; margin-left: 4px; padding-top: 3px; }

/* Model space */
.canvas { flex: 1; display: flex; min-height: 0; }
.sheet { flex: 1; position: relative; overflow: hidden; background: #fff; }
.drawing { position: absolute; inset: 0; }
.axis { font: 300 18px Lato, sans-serif; }
.viewlabel { position: absolute; left: 4px; top: 6px; color: #111; }
.cube { position: absolute; right: 21px; top: 20px; width: 124px; height: 124px; display: grid; grid-template: 36px 52px 36px / 36px 52px 36px; place-items: center; }
.cube svg { position: absolute; inset: 0; }
.cube b { font: 700 18px/20px "Noto Sans CJK SC", sans-serif; color: #bcbcbc; z-index: 1; }
.cube .n { grid-area: 1 / 2; align-self: start; margin-top: -4px; }
.cube .s { grid-area: 3 / 2; align-self: end; margin-bottom: -6px; }
.cube .w { grid-area: 2 / 1; justify-self: start; margin-left: -4px; }
.cube .e { grid-area: 2 / 3; justify-self: end; margin-right: -4px; }
.cube .face { grid-area: 2 / 2; width: 52px; height: 52px; border: 1px solid #aaa; background: linear-gradient(#d5d9dfb0, #d5d9dfb0) center / 32px 32px no-repeat, #e4e4e4b8; color: #9a9ea6; font: 28px/32px "Noto Sans CJK SC", sans-serif; z-index: 1; }
.wcs { position: absolute; right: 60px; top: 171px; width: 46px; height: 16px; gap: 4px; border-radius: 3px; background: #e3e4f0cc; color: #999; font: 11px/16px "Liberation Sans", sans-serif; }
.navbar { position: absolute; right: 1px; top: 210px; width: 37px; height: 216px; border: 1px solid #bbb; border-width: 1px 2px 2px; border-radius: 6px; background: #f0f0f0a8; }
.command { position: absolute; left: 496px; right: 487px; bottom: 0; height: 27px; display: flex; align-items: center; padding-bottom: 2px; border: 1px solid #8a8a8a; border-radius: 3px; background: #ffffffd0; overflow: hidden; }
.grip { display: flex; align-items: center; align-self: flex-start; gap: 6px; width: 54px; height: 26px; padding: 0 3px; background: linear-gradient(#999, #6e6e6e); }
.wrench { margin-left: 4px; }
.prompt { display: flex; align-items: center; gap: 4px; padding: 0 9px 0 5px; }
.prompt .caret { background: #999; }
.command input { flex: 1; height: 20px; }
.command input::placeholder { color: #aaa; opacity: 1; }
.command .up { margin-right: 4px; background: #555; }
.edge { width: 8px; background: #b9d1ea; border-right: 1px solid #111; box-shadow: inset -1px 0 #18c8f0; position: relative; }
.edge i { position: absolute; left: -2px; top: 52px; width: 8px; height: 57px; border-radius: 4px; border: 1px solid #555b63; background: linear-gradient(#555b63 33px, transparent 33px), repeating-linear-gradient(#2fd464 0 2px, #1b6b39 2px 3px); }

/* Status bar */
.foot { display: flex; height: 30px; position: relative; background: #b1b1b1; border-bottom: 2px solid #2b303b; }
.layouts { flex: 1; display: flex; align-items: flex-start; padding-left: 9px; color: #666; }
.layouts a { position: relative; width: 52px; height: 18px; display: flex; justify-content: center; align-items: center; }
.layouts a svg { position: absolute; left: 0; top: 0; }
.layouts a span { position: relative; }
.layouts button { margin-left: 5px; }
.layouts .on { color: #111; font-weight: 700; }
.status { display: flex; align-items: center; padding-bottom: 2px; background: #e6e6e6; color: #111; }
.status hr { flex: none; width: 2px; height: 24px; margin: 0; border: 0; background: #efefef; }
.status button { height: 24px; }
.coords { width: 184px; padding-left: 16px; white-space: nowrap; }
.status .model { width: 30px; font-weight: 700; }
.s12 { width: 12px; } .s16 { width: 16px; } .s20 { width: 20px; } .s24 { width: 24px; } .s28 { width: 28px; }
.status .caret { background: #111; }
.glow { filter: drop-shadow(0 0 2px #9cccff); }
.units { display: flex; align-items: center; width: 76px; padding: 0 5px 0 6px; font-weight: 700; }
.units select { flex: 1; min-width: 0; }
.watermark { position: absolute; right: 5px; top: -33px; color: #777; font: 900 37px/44px "Noto Sans CJK SC", sans-serif; white-space: nowrap; pointer-events: none; }
```
FILE: grid.js
```js
// Draws the model-space grid: every fifth line is a major one.
const STEP = 19.46;
const ORIGIN_X = 82.8;
const ORIGIN_Y = 15.3;

function drawGrid() {
  const sheet = document.querySelector('.sheet');
  const w = sheet.clientWidth, h = sheet.clientHeight;
  let minor = '', major = '';
  for (let i = -4; ; i++) {
    const x = Math.round(ORIGIN_X + i * STEP) + 0.5;
    if (x > w) break;
    const seg = `M${x} 0V${h}`;
    if (i % 5 === 0) major += seg; else minor += seg;
  }
  for (let j = 0; ; j++) {
    const y = Math.round(ORIGIN_Y + j * STEP) + 0.5;
    if (y > h) break;
    const seg = `M0 ${y}H${w}`;
    if (j % 5 === 0) major += seg; else minor += seg;
  }
  document.getElementById('minor').setAttribute('d', minor);
  document.getElementById('major').setAttribute('d', major);
  document.getElementById('minor-soft').setAttribute('d', minor + major);
}
drawGrid();
window.addEventListener('resize', drawGrid);
```
